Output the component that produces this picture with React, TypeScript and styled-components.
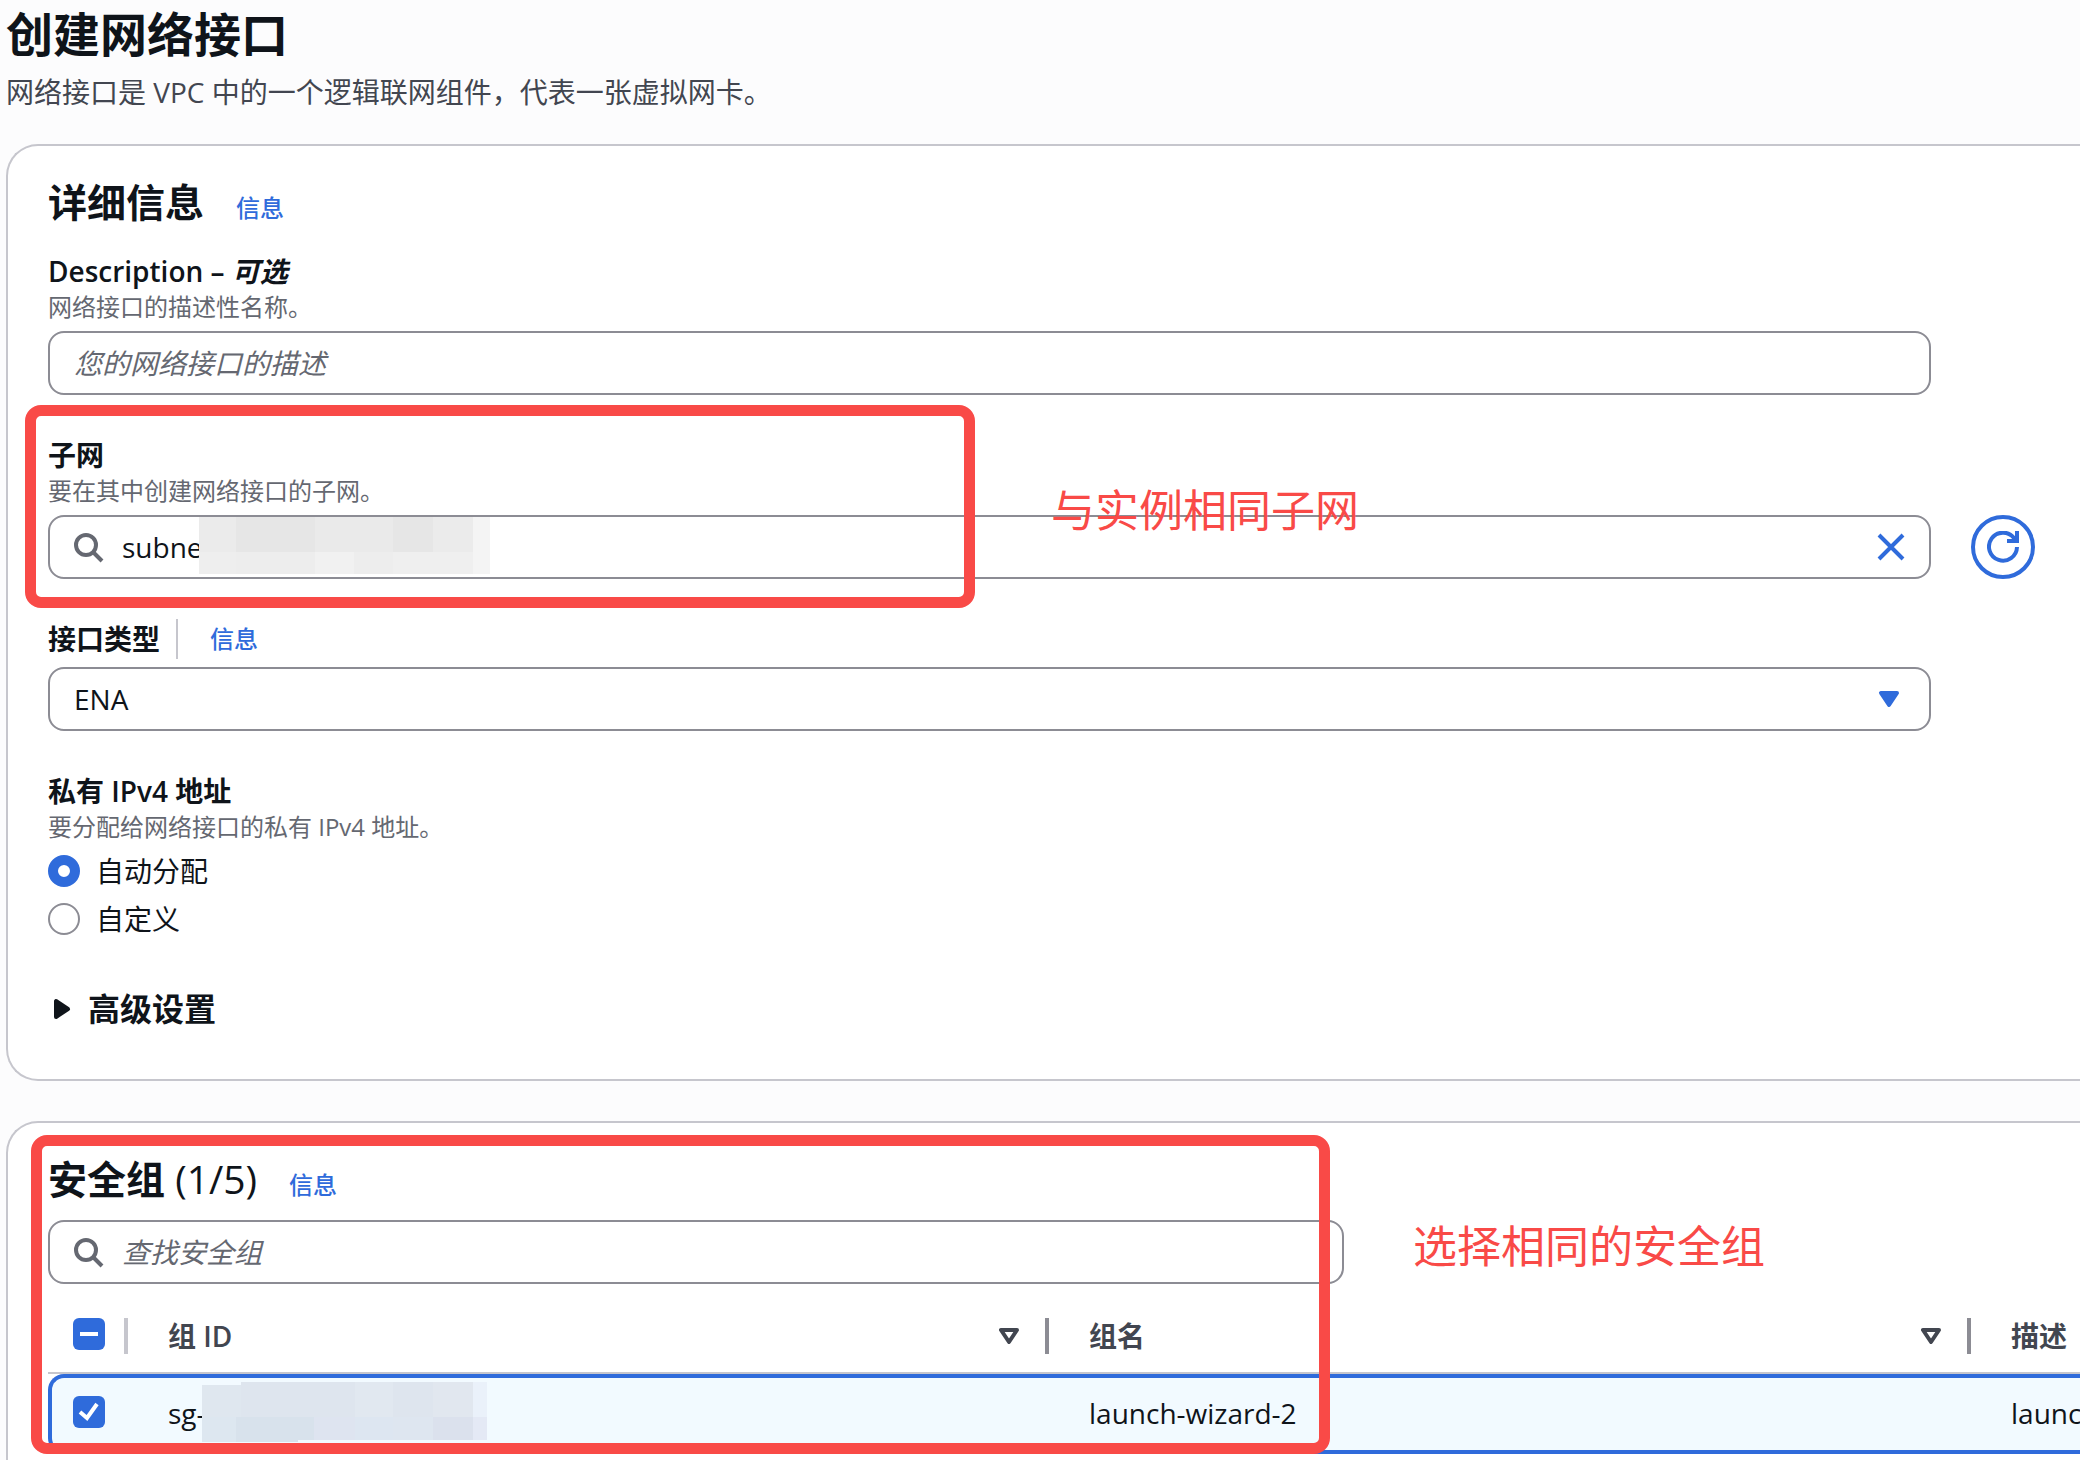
import React, { useState } from "react";
import styled, { createGlobalStyle } from "styled-components";

const color = {
  page: "#fcfcfd",
  card: "#ffffff",
  cardBorder: "#c6c6cd",
  controlBorder: "#8c8c94",
  heading: "#0f141a",
  secondary: "#424650",
  hint: "#656871",
  accent: "#2f6bdb",
  selected: "#f2faff",
  mark: "#f94a47",
};

const GlobalStyle = createGlobalStyle`
  *, *::before, *::after { box-sizing: border-box; }
  body {
    margin: 0;
    background: ${color.page};
    color: ${color.heading};
    font-family: "Open Sans", "Noto Sans CJK SC", sans-serif;
    font-size: 28px;
    line-height: 40px;
    overflow: hidden;
  }
  button, input, select { font: inherit; color: inherit; }
`;

const Page = styled.main`
  display: flex;
  flex-direction: column;
  gap: 40px;
  padding-left: 6px;
  height: 100vh;
  overflow: hidden;
`;

const PageHeader = styled.header`
  flex: none;
  height: 104px;
`;

const Title = styled.h1`
  margin: 0;
  padding-top: 2px;
  font-size: 47px;
  line-height: 64px;
  font-weight: 700;
`;

const Subtitle = styled.p`
  margin: 0;
  padding-top: 6px;
  color: ${color.secondary};
`;

const Card = styled.section`
  position: relative;
  flex: none;
  padding: 32px 45px 0 40px;
  border: 2px solid ${color.cardBorder};
  border-right: none;
  border-radius: 32px 0 0 32px;
  background: ${color.card};
`;

const TableCard = styled(Card)`
  padding-right: 0;
  padding-bottom: 40px;
`;

const CardHeader = styled.div<{ $gap: number }>`
  display: flex;
  align-items: baseline;
  gap: 32px;
  height: 50px;
  margin-bottom: ${(p) => p.$gap}px;
`;

const CardTitle = styled.h2`
  margin: 0;
  font-size: 39px;
  line-height: 48px;
  font-weight: 700;
`;

const Count = styled.span`
  font-weight: 400;
`;

const InfoLink = styled.a`
  color: ${color.accent};
  font-size: 24px;
  line-height: 32px;
  font-weight: 500;
  text-decoration: none;
`;

const Form = styled.form`
  display: flex;
  flex-direction: column;
  gap: 40px;
`;

const Field = styled.div`
  position: relative;
  display: grid;
  grid-template-columns: minmax(0, 1fr) 64px;
  column-gap: 40px;
`;

const FieldHead = styled.div`
  grid-column: 1 / -1;
  padding-bottom: 8px;
`;

const LabelRow = styled.div`
  display: flex;
  align-items: center;
  gap: 16px;
`;

const Label = styled.label`
  display: block;
  font-weight: 600;
  line-height: 40px;
`;

const Hint = styled.div`
  color: ${color.hint};
  font-size: 24px;
  line-height: 32px;
`;

const Divided = styled.span`
  display: flex;
  align-items: center;
  height: 40px;
  padding-left: 32px;
  border-left: 2px solid ${color.cardBorder};
`;

const Control = styled.div`
  display: flex;
  align-items: center;
  gap: 16px;
  height: 64px;
  padding: 0 22px;
  border: 2px solid ${color.controlBorder};
  border-radius: 16px;
  background: ${color.card};
`;

const TextInput = styled.input`
  flex: 1;
  min-width: 0;
  height: 40px;
  padding: 0 0 0 2px;
  border: none;
  outline: none;
  background: transparent;
  &::placeholder {
    color: ${color.hint};
    font-style: italic;
    opacity: 1;
  }
`;

const SelectInput = styled.select`
  flex: 1;
  height: 40px;
  padding: 0 0 0 2px;
  border: none;
  outline: none;
  background: transparent;
  appearance: none;
`;

const IconButton = styled.button`
  display: flex;
  padding: 0;
  border: none;
  background: none;
`;

const RoundButton = styled.button`
  display: flex;
  align-items: center;
  justify-content: center;
  width: 64px;
  height: 64px;
  padding: 0;
  border: 4px solid ${color.accent};
  border-radius: 50%;
  background: ${color.card};
`;

const Fieldset = styled.fieldset`
  margin: 0;
  padding: 0;
  border: none;
`;

const Legend = styled.legend`
  padding: 0;
  font-weight: 600;
`;

const RadioList = styled.div`
  display: flex;
  flex-direction: column;
  gap: 8px;
  padding-top: 8px;
`;

const RadioRow = styled.label`
  display: flex;
  align-items: center;
  gap: 16px;
`;

const Radio = styled.input`
  appearance: none;
  width: 32px;
  height: 32px;
  margin: 0;
  border: 2px solid ${color.controlBorder};
  border-radius: 50%;
  background: ${color.card};
  &:checked {
    border: 10px solid ${color.accent};
  }
`;

const Expander = styled.button`
  display: flex;
  align-items: center;
  gap: 8px;
  height: 60px;
  margin-bottom: 40px;
  padding: 0;
  border: none;
  background: none;
  font-size: 32px;
  font-weight: 700;
`;

const SearchBox = styled(Control)`
  width: calc(100% - 736px);
`;

const Table = styled.table`
  width: 100%;
  margin-top: 16px;
  border-collapse: separate;
  border-spacing: 0;
  table-layout: fixed;
`;

const HeadCell = styled.th`
  height: 74px;
  padding: 0;
  border-bottom: 2px solid ${color.cardBorder};
  color: ${color.secondary};
  font-weight: 600;
  text-align: left;
`;

const HeadInner = styled.div<{ $line?: string }>`
  display: flex;
  align-items: center;
  justify-content: space-between;
  height: 36px;
  padding: 0 26px 0 40px;
  border-right: ${(p) => (p.$line ? `4px solid ${p.$line}` : "none")};
  white-space: nowrap;
`;

const CheckInner = styled(HeadInner)`
  align-items: flex-start;
  padding: 0 0 0 25px;
`;

const Cell = styled.td`
  position: relative;
  height: 80px;
  padding: 0 0 2px 40px;
  border: 0 solid ${color.accent};
  border-width: 4px 0;
  background: ${color.selected};
  white-space: nowrap;
`;

const CheckCell = styled(Cell)`
  padding: 0 0 4px 21px;
  border-left-width: 4px;
  border-radius: 16px 0 0 16px;
`;

const CheckWrap = styled.label`
  display: grid;
  width: 32px;
  height: 32px;
  > * { grid-area: 1 / 1; }
  > svg { pointer-events: none; }
`;

const Check = styled.input`
  appearance: none;
  width: 32px;
  height: 32px;
  margin: 0;
  border-radius: 6px;
  background: ${color.accent};
`;

const MarkBox = styled.div<{ $left: number; $top: number; $width: number; $height: number }>`
  position: absolute;
  left: ${(p) => p.$left}px;
  top: ${(p) => p.$top}px;
  width: ${(p) => p.$width}px;
  height: ${(p) => p.$height}px;
  border: 11px solid ${color.mark};
  border-radius: 16px;
  pointer-events: none;
`;

const MarkText = styled.div<{ $left: number; $top: number }>`
  position: absolute;
  left: ${(p) => p.$left}px;
  top: ${(p) => p.$top}px;
  color: ${color.mark};
  font-size: 44px;
  line-height: 56px;
  white-space: nowrap;
  pointer-events: none;
`;

const MosaicSvg = styled.svg<{ $left: number; $top: number }>`
  position: absolute;
  left: ${(p) => p.$left}px;
  top: ${(p) => p.$top}px;
  pointer-events: none;
`;

type Block = [number, number, number, number, string];

function Mosaic({ left, top, width, height, blocks }: { left: number; top: number; width: number; height: number; blocks: Block[] }) {
  return (
    <MosaicSvg $left={left} $top={top} width={width} height={height} shapeRendering="crispEdges" aria-hidden="true">
      {blocks.map(([x, y, w, h, fill]) => (
        <rect key={`${x}-${y}`} x={x} y={y} width={w} height={h} fill={fill} />
      ))}
    </MosaicSvg>
  );
}

const subnetBlocks: Block[] = [
  [0, 0, 37, 35, "#ebebeb"],
  [37, 0, 79, 35, "#e6e6e6"],
  [116, 0, 78, 35, "#eaeaea"],
  [194, 0, 40, 35, "#e6e6e6"],
  [234, 0, 40, 35, "#ebebeb"],
  [274, 0, 17, 35, "#f4f4f4"],
  [0, 35, 37, 22, "#eeeeee"],
  [37, 35, 79, 22, "#ededed"],
  [116, 35, 39, 22, "#f1f1f1"],
  [155, 35, 39, 22, "#ededed"],
  [194, 35, 80, 22, "#efefef"],
  [274, 35, 17, 22, "#f4f4f4"],
];

const groupBlocks: Block[] = [
  [0, 3, 39, 32, "#dfe7ef"],
  [39, 0, 114, 35, "#dee5ee"],
  [153, 0, 38, 35, "#e1e8f0"],
  [191, 0, 40, 35, "#dee5ee"],
  [231, 0, 40, 35, "#e1e7ef"],
  [271, 0, 14, 35, "#eaf1fa"],
  [0, 35, 34, 25, "#dde7f0"],
  [34, 35, 78, 23, "#d8e2ec"],
  [112, 35, 41, 23, "#dee4f0"],
  [153, 35, 38, 23, "#dde6f1"],
  [191, 35, 40, 23, "#dee6f0"],
  [231, 35, 40, 23, "#dbe1ed"],
  [271, 35, 14, 23, "#e4e9f5"],
  [34, 58, 62, 2, "#d8e2ec"],
];

const SearchIcon = () => (
  <svg width="32" height="32" viewBox="0 0 32 32" fill="none" stroke={color.hint} strokeWidth="4" aria-hidden="true">
    <circle cx="14" cy="14" r="10" />
    <path d="M21 21l9 9" />
  </svg>
);

const CloseIcon = () => (
  <svg width="32" height="32" viewBox="0 0 32 32" fill="none" stroke={color.accent} strokeWidth="4" aria-hidden="true">
    <path d="M4 4l24 24M28 4L4 28" />
  </svg>
);

const CaretIcon = () => (
  <svg width="32" height="32" viewBox="0 0 32 32" fill={color.accent} stroke={color.accent} strokeWidth="4" strokeLinejoin="round" aria-hidden="true">
    <path d="M6 10h16l-8 12z" />
  </svg>
);

const RefreshIcon = () => (
  <svg width="32" height="32" viewBox="0 0 32 32" fill="none" stroke={color.accent} strokeWidth="4" aria-hidden="true">
    <path d="M30 16a14 14 0 1 1-3-9l3 3" />
    <path d="M30 0v10H20" />
  </svg>
);

const ExpandIcon = () => (
  <svg width="32" height="32" viewBox="0 0 32 32" fill={color.heading} stroke={color.heading} strokeWidth="4" strokeLinejoin="round" aria-hidden="true">
    <path d="M8 8v16l12-8z" />
  </svg>
);

const SortIcon = () => (
  <svg width="20" height="16" viewBox="0 0 20 16" fill="none" stroke={color.secondary} strokeWidth="4" strokeLinejoin="round" aria-hidden="true">
    <path d="M2 2h16l-8 12z" />
  </svg>
);

export default function App() {
  const [allocation, setAllocation] = useState("auto");
  return (
    <>
      <GlobalStyle />
      <Page>
        <PageHeader>
          <Title>创建网络接口</Title>
          <Subtitle>网络接口是 VPC 中的一个逻辑联网组件，代表一张虚拟网卡。</Subtitle>
        </PageHeader>

        <Card>
          <CardHeader $gap={23}>
            <CardTitle>详细信息</CardTitle>
            <InfoLink href="#details">信息</InfoLink>
          </CardHeader>
          <Form>
            <Field>
              <FieldHead>
                <Label htmlFor="description">
                  Description – <em>可选</em>
                </Label>
                <Hint>网络接口的描述性名称。</Hint>
              </FieldHead>
              <Control>
                <TextInput id="description" placeholder="您的网络接口的描述" />
              </Control>
            </Field>

            <Field>
              <FieldHead>
                <Label htmlFor="subnet">子网</Label>
                <Hint>要在其中创建网络接口的子网。</Hint>
              </FieldHead>
              <Control>
                <SearchIcon />
                <TextInput id="subnet" defaultValue="subnet" />
                <IconButton type="button" aria-label="清除">
                  <CloseIcon />
                </IconButton>
              </Control>
              <RoundButton type="button" aria-label="刷新">
                <RefreshIcon />
              </RoundButton>
              <Mosaic left={151} top={82} width={291} height={57} blocks={subnetBlocks} />
              <MarkBox $left={-23} $top={-30} $width={950} $height={203} />
              <MarkText $left={1003} $top={47}>与实例相同子网</MarkText>
            </Field>

            <Field>
              <FieldHead>
                <LabelRow>
                  <Label htmlFor="type">接口类型</Label>
                  <Divided>
                    <InfoLink href="#type">信息</InfoLink>
                  </Divided>
                </LabelRow>
              </FieldHead>
              <Control>
                <SelectInput id="type" defaultValue="ENA">
                  <option>ENA</option>
                </SelectInput>
                <CaretIcon />
              </Control>
            </Field>

            <Fieldset>
              <Legend>私有 IPv4 地址</Legend>
              <Hint>要分配给网络接口的私有 IPv4 地址。</Hint>
              <RadioList>
                <RadioRow>
                  <Radio type="radio" name="ipv4" checked={allocation === "auto"} onChange={() => setAllocation("auto")} />
                  自动分配
                </RadioRow>
                <RadioRow>
                  <Radio type="radio" name="ipv4" checked={allocation === "custom"} onChange={() => setAllocation("custom")} />
                  自定义
                </RadioRow>
              </RadioList>
            </Fieldset>

            <Expander type="button" aria-expanded="false">
              <ExpandIcon />
              高级设置
            </Expander>
          </Form>
        </Card>

        <TableCard>
          <CardHeader $gap={15}>
            <CardTitle>
              安全组 <Count>(1/5)</Count>
            </CardTitle>
            <InfoLink href="#groups">信息</InfoLink>
          </CardHeader>
          <SearchBox>
            <SearchIcon />
            <TextInput aria-label="查找安全组" placeholder="查找安全组" />
          </SearchBox>
          <Table>
            <colgroup>
              <col width="80" />
              <col width="921" />
              <col width="922" />
              <col />
            </colgroup>
            <thead>
              <tr>
                <HeadCell>
                  <CheckInner $line={color.cardBorder}>
                    <CheckWrap>
                      <Check type="checkbox" defaultChecked aria-label="全选" />
                      <svg width="32" height="32" viewBox="0 0 32 32" stroke="#fff" strokeWidth="4" aria-hidden="true">
                        <path d="M7 16h18" />
                      </svg>
                    </CheckWrap>
                  </CheckInner>
                </HeadCell>
                <HeadCell>
                  <HeadInner $line={color.controlBorder}>
                    组 ID
                    <SortIcon />
                  </HeadInner>
                </HeadCell>
                <HeadCell>
                  <HeadInner $line={color.controlBorder}>
                    组名
                    <SortIcon />
                  </HeadInner>
                </HeadCell>
                <HeadCell>
                  <HeadInner>描述</HeadInner>
                </HeadCell>
              </tr>
            </thead>
            <tbody>
              <tr>
                <CheckCell>
                  <CheckWrap>
                    <Check type="checkbox" defaultChecked aria-label="选择 launch-wizard-2" />
                    <svg width="32" height="32" viewBox="0 0 32 32" fill="none" stroke="#fff" strokeWidth="4" aria-hidden="true">
                      <path d="M7 16l7 6L24 8" />
                    </svg>
                  </CheckWrap>
                </CheckCell>
                <Cell>
                  sg-
                  <Mosaic left={74} top={4} width={285} height={60} blocks={groupBlocks} />
                </Cell>
                <Cell>launch-wizard-2</Cell>
                <Cell>launc</Cell>
              </tr>
            </tbody>
          </Table>
          <MarkBox $left={23} $top={12} $width={1299} $height={319} />
          <MarkText $left={1405} $top={95}>选择相同的安全组</MarkText>
        </TableCard>
      </Page>
    </>
  );
}
